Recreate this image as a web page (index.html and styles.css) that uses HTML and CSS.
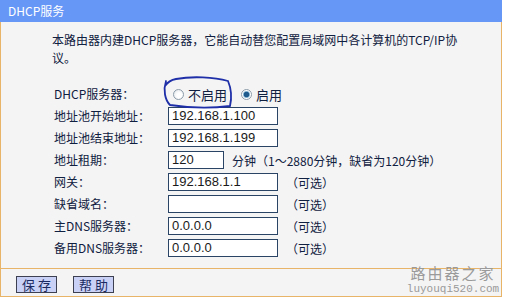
FILE: index.html
```html
<!DOCTYPE html>
<html>
<head>
<meta charset="utf-8">
<link rel="stylesheet" href="styles.css">
</head>
<body>
<div class="panel">
  <div class="header">DHCP服务</div>
  <div class="body">
    <p class="desc">本路由器内建DHCP服务器，它能自动替您配置局域网中各计算机的TCP/IP协议。</p>
    <div class="form">
      <div class="row">
        <span class="label">DHCP服务器：</span>
        <span class="radio"></span><span class="rtext">不启用</span>
        <span class="radio checked"></span><span class="rtext">启用</span>
      </div>
      <div class="row"><span class="label">地址池开始地址：</span><span class="input">192.168.1.100</span></div>
      <div class="row"><span class="label">地址池结束地址：</span><span class="input">192.168.1.199</span></div>
      <div class="row"><span class="label">地址租期：</span><span class="input short">120</span><span class="note">分钟（1～2880分钟，缺省为120分钟）</span></div>
      <div class="row"><span class="label">网关：</span><span class="input">192.168.1.1</span><span class="note">（可选）</span></div>
      <div class="row"><span class="label">缺省域名：</span><span class="input"></span><span class="note">（可选）</span></div>
      <div class="row"><span class="label">主DNS服务器：</span><span class="input">0.0.0.0</span><span class="note">（可选）</span></div>
      <div class="row"><span class="label">备用DNS服务器：</span><span class="input">0.0.0.0</span><span class="note">（可选）</span></div>
    </div>
  </div>
  <div class="footer">
    <span class="btn">保 存</span>
    <span class="btn">帮 助</span>
  </div>
  <svg class="ink" width="506" height="302" viewBox="0 0 506 302">
    <path d="M166 81 C163 90 165 100 170 105 C190 108 214 108 230 106 C232 97 231 88 228 81 C214 77 192 76 176 79 C170 80 167 83 165 86" fill="none" stroke="#1e2fa8" stroke-width="1.8" stroke-linecap="round"/>
  </svg>
  <div class="mark">
    <div class="mark-cn">路由器之家</div>
    <div class="mark-en">luyouqi520.com</div>
  </div>
</div>
</body>
</html>
```
FILE: styles.css
```css
html, body {
  margin: 0;
  padding: 0;
  background: #ffffff;
}
body {
  font-family: "Noto Sans CJK SC", "Liberation Sans", sans-serif;
  font-size: 12px;
  color: #102040;
}
.panel {
  position: relative;
  width: 502px;
  height: 302px;
}
.header {
  height: 22px;
  line-height: 21px;
  background: #6797f6;
  color: #ffffff;
  padding-left: 8px;
  font-size: 12px;
}
.body {
  background: #f4f4f4;
  border-left: 1px solid #e8b468;
  border-right: 1px solid #e8b468;
  height: 246px;
  box-sizing: border-box;
  padding-top: 9px;
}
.desc {
  margin: 0 0 0 51px;
  width: 410px;
  line-height: 18px;
}
.form {
  margin-top: 16px;
  padding-left: 53px;
}
.row {
  height: 22px;
  display: flex;
  align-items: center;
}
.label {
  width: 114px;
  flex: none;
  line-height: 20px;
}
.input {
  box-sizing: border-box;
  width: 110px;
  height: 18px;
  border: 1px solid #2a4466;
  background: #ffffff;
  font-family: "Liberation Sans", Arial, sans-serif;
  font-size: 13px;
  color: #1a1a1a;
  line-height: 16px;
  padding-left: 3px;
  flex: none;
}
.input.short {
  width: 56px;
}
.note {
  margin-left: 8px;
}
.radio {
  box-sizing: border-box;
  width: 11px;
  height: 11px;
  border-radius: 50%;
  border: 1px solid #8c9caa;
  background: radial-gradient(circle at 60% 60%, #ffffff 30%, #dde2e6 100%);
  margin-left: 5px;
  margin-right: 4px;
  flex: none;
}
.radio.checked {
  background: radial-gradient(circle, #1f5a8c 0 2.5px, #7fb0d0 3px, #ffffff 4px);
  margin-left: 14px;
}
.rtext {
  font-size: 13px;
}
.footer {
  background: #f4f4f4;
  border: 1px solid #e8b468;
  height: 29px;
  box-sizing: border-box;
  display: flex;
  align-items: flex-start;
  gap: 16px;
  padding: 7px 0 0 15px;
}
.btn {
  box-sizing: border-box;
  width: 41px;
  height: 17px;
  line-height: 15px;
  text-align: center;
  background: #c9d1f7;
  border: 1px solid #3c4050;
  font-size: 13px;
  color: #1a2a60;
}
.ink {
  position: absolute;
  left: 0;
  top: 0;
  pointer-events: none;
}
.mark {
  position: absolute;
  left: 404px;
  top: 264px;
  width: 98px;
  text-align: center;
  color: #9a9a9a;
}
.mark-cn {
  font-family: "Noto Sans CJK SC", serif;
  font-size: 15px;
  letter-spacing: 2px;
  line-height: 18px;
}
.mark-en {
  font-family: "Liberation Mono", monospace;
  font-size: 11px;
  line-height: 12px;
  margin-top: 1px;
}
```
